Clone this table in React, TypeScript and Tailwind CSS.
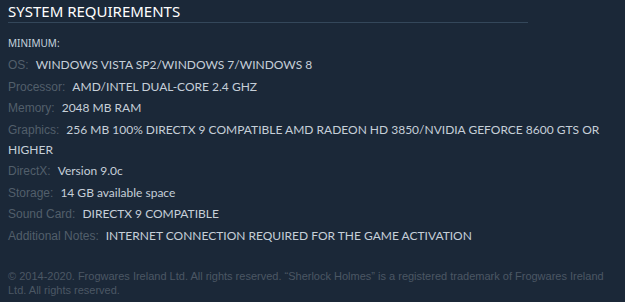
import React from "react";

const specs: { label: string; value: string }[] = [
  { label: "OS:", value: "WINDOWS VISTA SP2/WINDOWS 7/WINDOWS 8" },
  { label: "Processor:", value: "AMD/INTEL DUAL-CORE 2.4 GHZ" },
  { label: "Memory:", value: "2048 MB RAM" },
  {
    label: "Graphics:",
    value: "256 MB 100% DIRECTX 9 COMPATIBLE AMD RADEON HD 3850/NVIDIA GEFORCE 8600 GTS OR HIGHER",
  },
  { label: "DirectX:", value: "Version 9.0c" },
  { label: "Storage:", value: "14 GB available space" },
  { label: "Sound Card:", value: "DIRECTX 9 COMPATIBLE" },
  { label: "Additional Notes:", value: "INTERNET CONNECTION REQUIRED FOR THE GAME ACTIVATION" },
];

const App = () => {
  return (
    <div className="w-[625px] h-[302px] bg-[#1b2838] overflow-hidden px-2 pt-[3px]">
      {/* Heading */}
      <div className="w-[520px] border-b border-[#34475a] pb-[2px] text-[15px] leading-[17px] text-white font-['Noto_Sans',sans-serif]">
        SYSTEM REQUIREMENTS
      </div>

      {/* Minimum specs */}
      <div className="mt-[14px] text-[10px] leading-[12px] text-[#c6d4df] font-['Noto_Sans',sans-serif]">
        MINIMUM:
      </div>
      <ul className="mt-[6px] flex flex-col gap-[1.5px]">
        {specs.map((s) => (
          <li key={s.label} className="text-[12px] leading-[20px] text-[#c6cfd8] font-['Lato',sans-serif]">
            <span className="mr-[7px] text-[12px] text-[#525f6b] font-['Liberation_Sans',sans-serif]">{s.label}</span>
            {s.value}
          </li>
        ))}
      </ul>

      {/* Legal */}
      <p className="mt-[23px] w-[600px] text-[11px] leading-[14px] text-[#4b5764] font-['Liberation_Sans',sans-serif]">
        © 2014-2020. Frogwares Ireland Ltd. All rights reserved. “Sherlock Holmes” is a registered trademark of Frogwares Ireland Ltd. All rights reserved.
      </p>
    </div>
  );
};

export default App;
